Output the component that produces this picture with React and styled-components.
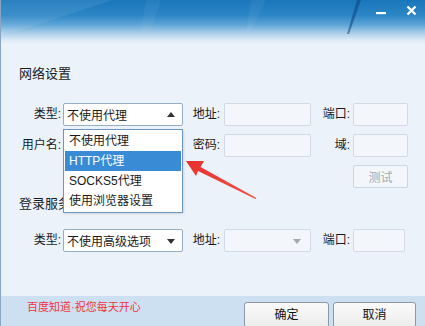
import React from "react";
import styled, { createGlobalStyle } from "styled-components";

const Global = createGlobalStyle`
  html, body { margin: 0; padding: 0; background: #ebf2fa; }
  body {
    font-family: "Liberation Sans", "Noto Sans CJK SC", sans-serif;
    font-size: 12px;
    color: #1a1a1a;
  }
`;

const Window = styled.div`
  position: relative;
  width: 425px;
  height: 326px;
  overflow: hidden;
  display: flex;
  flex-direction: column;
  background: #ebf2fa;
  box-sizing: border-box;
  border-left: 1px solid #8aa6c2;
`;

const TitleBar = styled.div`
  position: relative;
  height: 44px;
  flex-shrink: 0;
  background: linear-gradient(
    to bottom,
    #1a76bb 0%,
    #2c86c6 35%,
    #5aa3d6 55%,
    #a9cde9 75%,
    #dbe9f6 90%,
    #ebf2fa 100%
  );
  display: flex;
  justify-content: flex-end;
  align-items: flex-start;
  padding: 5px 8px 0 0;
  box-sizing: border-box;
  gap: 19px;
`;

const Deco = styled.svg`
  position: absolute;
  left: 0;
  top: 0;
  pointer-events: none;
`;

const WinBtn = styled.div`
  position: relative;
  width: 11px;
  height: 11px;
  display: flex;
  align-items: center;
  justify-content: center;
`;

const Content = styled.div`
  position: relative;
  flex: 1;
  padding: 0 0 0 18px;
`;

const SectionTitle = styled.div`
  font-size: 13px;
  line-height: 16px;
  margin-top: ${(p) => p.$mt}px;
  font-family: "Noto Sans CJK SC", sans-serif;
  white-space: nowrap;
`;

const FormGrid = styled.div`
  display: grid;
  grid-template-columns: 44px 120px 41px 87px 42px 55px;
  grid-auto-rows: 23px;
  row-gap: 8px;
  margin-top: ${(p) => p.$mt}px;
  align-items: center;
`;

const Label = styled.div`
  text-align: right;
  padding-right: ${(p) => p.$pr || 2}px;
  white-space: nowrap;
  line-height: 23px;
`;

const Box = styled.div`
  position: relative;
  box-sizing: border-box;
  height: 23px;
  width: ${(p) => p.$w || "100%"};
  border: 1px solid ${(p) => (p.$active ? "#97adc4" : "#d2dbe5")};
  border-radius: 2px;
  background: ${(p) => (p.$active ? "#ffffff" : "#f3f7fc")};
  display: flex;
  align-items: center;
  padding-left: 3px;
  white-space: nowrap;
  font-family: "Noto Sans CJK SC", sans-serif;
`;

const Tri = styled.span`
  position: absolute;
  right: ${(p) => p.$r || 6}px;
  top: 50%;
  width: 0;
  height: 0;
  border-left: 4px solid transparent;
  border-right: 4px solid transparent;
  ${(p) =>
    p.$up
      ? `border-bottom: 5px solid ${p.$c || "#333"}; margin-top: -3px;`
      : `border-top: 5px solid ${p.$c || "#333"}; margin-top: -2px;`}
`;

const Dropdown = styled.div`
  position: absolute;
  left: -1px;
  top: 25px;
  width: 120px;
  box-sizing: border-box;
  border: 1px solid #6f96bf;
  background: #ffffff;
  padding: 1px 1px;
  z-index: 5;
  box-shadow: 1px 1px 2px rgba(0, 0, 0, 0.12);
`;

const Option = styled.div`
  height: 20px;
  line-height: 20px;
  padding-left: 4px;
  white-space: nowrap;
  font-family: "Liberation Sans", "Noto Sans CJK SC", sans-serif;
  color: ${(p) => (p.$sel ? "#ffffff" : "#1a1a1a")};
  background: ${(p) => (p.$sel ? "#3a8bd5" : "transparent")};
`;

const TestButton = styled.div`
  grid-column: 6;
  box-sizing: border-box;
  height: 23px;
  border: 1px solid #ccd6e0;
  border-radius: 2px;
  background: #f3f7fb;
  color: #a3a9b0;
  display: flex;
  align-items: center;
  justify-content: center;
  font-family: "Noto Sans CJK SC", sans-serif;
`;

const Footer = styled.div`
  height: 30px;
  flex-shrink: 0;
  background: #cde0f1;
  display: flex;
  align-items: flex-start;
  padding: 0 9px 0 26px;
  box-sizing: border-box;
`;

const Slogan = styled.div`
  margin-top: 4px;
  font-size: 11px;
  line-height: 14px;
  color: #f2333f;
  font-family: "Liberation Sans", "Noto Sans CJK SC", sans-serif;
  white-space: nowrap;
`;

const Buttons = styled.div`
  margin-left: auto;
  margin-top: 6px;
  display: flex;
  gap: 4px;
`;

const DlgButton = styled.div`
  width: ${(p) => p.$w}px;
  height: 26px;
  box-sizing: border-box;
  border: 1px solid #8c98a5;
  border-radius: 3px;
  background: linear-gradient(to bottom, #fafafa, #ececec);
  display: flex;
  align-items: center;
  justify-content: center;
  padding-bottom: 3px;
  font-size: 12px;
  font-family: "Noto Sans CJK SC", sans-serif;
  color: #111;
`;

const ArrowSvg = styled.svg`
  position: absolute;
  left: 0;
  top: 0;
  pointer-events: none;
  z-index: 10;
`;

function SelectBox({ text, up, open, disabled, w }) {
  return (
    <Box $active={!disabled} $w={w}>
      {text}
      <Tri $up={up} $c={disabled ? "#a8a8a8" : "#333"} $r={disabled ? 9 : 7} />
      {open && (
        <Dropdown>
          <Option>不使用代理</Option>
          <Option $sel>HTTP代理</Option>
          <Option>SOCKS5代理</Option>
          <Option>使用浏览器设置</Option>
        </Dropdown>
      )}
    </Box>
  );
}

export default function App() {
  return (
    <>
      <Global />
      <Window>
        <TitleBar>
          <Deco width="425" height="44" viewBox="0 0 425 44">
            <polygon points="0,0 112,0 20,30 0,34" fill="#ffffff" opacity="0.08" />
            <polygon points="145,0 160,0 150,30 140,32" fill="#ffffff" opacity="0.05" />
            <polygon points="250,0 265,0 250,30 245,32" fill="#ffffff" opacity="0.05" />
            <polygon points="356,0 360,0 348,34 346,34" fill="#0e3f7a" opacity="0.55" />
          </Deco>
          <WinBtn>
            <svg width="11" height="11" viewBox="0 0 11 11">
              <rect x="0" y="7" width="10" height="2.2" fill="#ffffff" />
            </svg>
          </WinBtn>
          <WinBtn>
            <svg width="11" height="11" viewBox="0 0 11 11">
              <path d="M1.5 1.5 L9.5 9.5 M9.5 1.5 L1.5 9.5" stroke="#ffffff" strokeWidth="2.3" />
            </svg>
          </WinBtn>
        </TitleBar>
        <Content>
          <SectionTitle $mt={21}>网络设置</SectionTitle>
          <FormGrid $mt={22}>
            <Label>类型:</Label>
            <SelectBox text="不使用代理" up open />
            <Label $pr={4}>地址:</Label>
            <Box />
            <Label $pr={3}>端口:</Label>
            <Box />

            <Label>用户名:</Label>
            <div />
            <Label $pr={4}>密码:</Label>
            <Box />
            <Label $pr={3}>域:</Label>
            <Box />

            <TestButton>测试</TestButton>
          </FormGrid>
          <SectionTitle $mt={7}>登录服务器设置</SectionTitle>
          <FormGrid $mt={18}>
            <Label>类型:</Label>
            <SelectBox text="不使用高级选项" />
            <Label $pr={4}>地址:</Label>
            <SelectBox text="" disabled />
            <Label $pr={3}>端口:</Label>
            <Box $w="52px" />
          </FormGrid>
        </Content>
        <Footer>
          <Slogan>百度知道·祝您每天开心</Slogan>
          <Buttons>
            <DlgButton $w={85}>确定</DlgButton>
            <DlgButton $w={83}>取消</DlgButton>
          </Buttons>
        </Footer>
        <ArrowSvg width="425" height="326" viewBox="0 0 425 326">
          <defs>
            <linearGradient id="ag" x1="0" y1="0" x2="1" y2="1">
              <stop offset="0" stopColor="#e8302c" />
              <stop offset="1" stopColor="#f0524a" />
            </linearGradient>
          </defs>
          <polygon
            points="185,161 203,161 199.5,167 255.5,198 254.5,199 197,171 195,176"
            fill="url(#ag)"
          />
        </ArrowSvg>
      </Window>
    </>
  );
}
